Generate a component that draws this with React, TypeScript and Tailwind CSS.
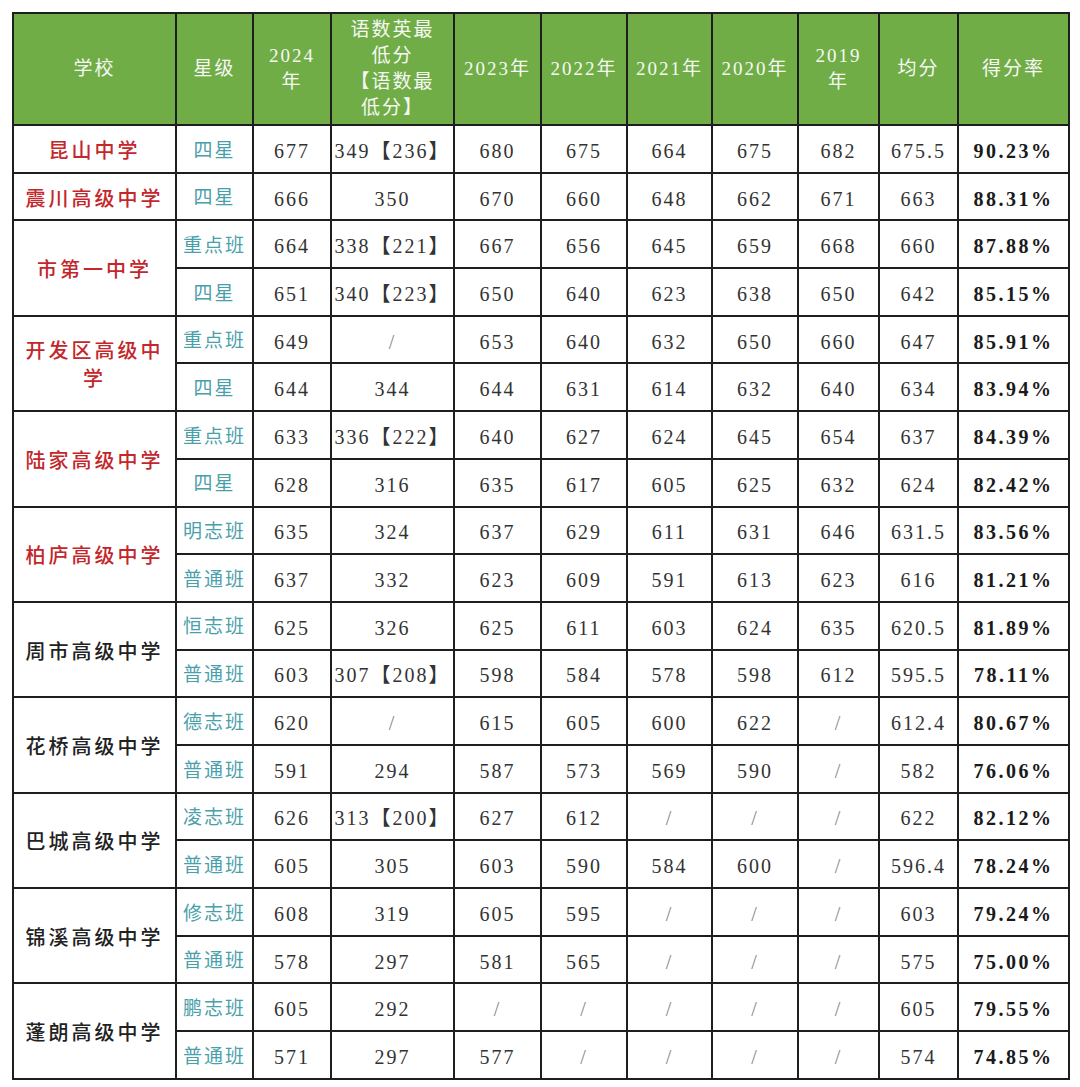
import React from 'react';

type Row = {
  cls: string;
  vals: string[];
  rate: string;
};

type School = {
  name: React.ReactNode;
  red: boolean;
  rows: Row[];
};

const SCHOOLS: School[] = [
  { name: '昆山中学', red: true, rows: [{ cls: '四星', vals: ['677', '349【236】', '680', '675', '664', '675', '682', '675.5'], rate: '90.23%' }] },
  { name: '震川高级中学', red: true, rows: [{ cls: '四星', vals: ['666', '350', '670', '660', '648', '662', '671', '663'], rate: '88.31%' }] },
  {
    name: '市第一中学',
    red: true,
    rows: [
      { cls: '重点班', vals: ['664', '338【221】', '667', '656', '645', '659', '668', '660'], rate: '87.88%' },
      { cls: '四星', vals: ['651', '340【223】', '650', '640', '623', '638', '650', '642'], rate: '85.15%' },
    ],
  },
  {
    name: <>开发区高级中<br />学</>,
    red: true,
    rows: [
      { cls: '重点班', vals: ['649', '/', '653', '640', '632', '650', '660', '647'], rate: '85.91%' },
      { cls: '四星', vals: ['644', '344', '644', '631', '614', '632', '640', '634'], rate: '83.94%' },
    ],
  },
  {
    name: '陆家高级中学',
    red: true,
    rows: [
      { cls: '重点班', vals: ['633', '336【222】', '640', '627', '624', '645', '654', '637'], rate: '84.39%' },
      { cls: '四星', vals: ['628', '316', '635', '617', '605', '625', '632', '624'], rate: '82.42%' },
    ],
  },
  {
    name: '柏庐高级中学',
    red: true,
    rows: [
      { cls: '明志班', vals: ['635', '324', '637', '629', '611', '631', '646', '631.5'], rate: '83.56%' },
      { cls: '普通班', vals: ['637', '332', '623', '609', '591', '613', '623', '616'], rate: '81.21%' },
    ],
  },
  {
    name: '周市高级中学',
    red: false,
    rows: [
      { cls: '恒志班', vals: ['625', '326', '625', '611', '603', '624', '635', '620.5'], rate: '81.89%' },
      { cls: '普通班', vals: ['603', '307【208】', '598', '584', '578', '598', '612', '595.5'], rate: '78.11%' },
    ],
  },
  {
    name: '花桥高级中学',
    red: false,
    rows: [
      { cls: '德志班', vals: ['620', '/', '615', '605', '600', '622', '/', '612.4'], rate: '80.67%' },
      { cls: '普通班', vals: ['591', '294', '587', '573', '569', '590', '/', '582'], rate: '76.06%' },
    ],
  },
  {
    name: '巴城高级中学',
    red: false,
    rows: [
      { cls: '凌志班', vals: ['626', '313【200】', '627', '612', '/', '/', '/', '622'], rate: '82.12%' },
      { cls: '普通班', vals: ['605', '305', '603', '590', '584', '600', '/', '596.4'], rate: '78.24%' },
    ],
  },
  {
    name: '锦溪高级中学',
    red: false,
    rows: [
      { cls: '修志班', vals: ['608', '319', '605', '595', '/', '/', '/', '603'], rate: '79.24%' },
      { cls: '普通班', vals: ['578', '297', '581', '565', '/', '/', '/', '575'], rate: '75.00%' },
    ],
  },
  {
    name: '蓬朗高级中学',
    red: false,
    rows: [
      { cls: '鹏志班', vals: ['605', '292', '/', '/', '/', '/', '/', '605'], rate: '79.55%' },
      { cls: '普通班', vals: ['571', '297', '577', '/', '/', '/', '/', '574'], rate: '74.85%' },
    ],
  },
];

const COLS = [163, 77, 78, 123, 87, 86, 85, 86, 81, 79, 111];

const cell = 'border-2 border-[#1e1e1e] text-center align-middle px-0 pb-0';

export default function App() {
  return (
    <div
      className="min-h-[1087px] w-[1080px] bg-white pl-[12px] pt-[12px]"
      style={{ fontFamily: '"Liberation Serif", "Noto Sans CJK SC", serif' }}
    >
      <table className="table-fixed border-collapse w-[1056px]">
        <colgroup>
          {COLS.map((w, i) => (
            <col key={i} style={{ width: w }} />
          ))}
        </colgroup>
        <thead>
          <tr className="h-[112px] bg-[#70ad47] text-[19px] leading-[26px] tracking-[2px] text-[#f6f8f3]">
            <th className={`${cell} pt-0 font-normal`}>学校</th>
            <th className={`${cell} pt-0 font-normal`}>星级</th>
            <th className={`${cell} pt-0 font-normal`}>2024<br />年</th>
            <th className={`${cell} pt-0 font-normal`}>语数英最<br />低分<br />【语数最<br />低分】</th>
            <th className={`${cell} pt-0 font-normal`}>2023年</th>
            <th className={`${cell} pt-0 font-normal`}>2022年</th>
            <th className={`${cell} pt-0 font-normal`}>2021年</th>
            <th className={`${cell} pt-0 font-normal`}>2020年</th>
            <th className={`${cell} pt-0 font-normal`}>2019<br />年</th>
            <th className={`${cell} pt-0 font-normal`}>均分</th>
            <th className={`${cell} pt-0 font-normal`}>得分率</th>
          </tr>
        </thead>
        <tbody className="text-[20px] tracking-[2px] text-[#333]">
          {SCHOOLS.map((s) =>
            s.rows.map((r, ri) => (
              <tr key={`${r.cls}-${r.rate}`} className="h-[47.7px]">
                {ri === 0 && (
                  <td
                    rowSpan={s.rows.length}
                    className={`${cell} pt-[4px] text-[20px] leading-[28px] tracking-[3px] font-medium ${s.red ? 'text-[#c3272b]' : 'text-[#222]'}`}
                  >
                    {s.name}
                  </td>
                )}
                <td className={`${cell} pt-[4px] text-[19px] text-[#4aa0aa]`}>{r.cls}</td>
                {r.vals.map((v, vi) => (
                  <td key={vi} className={`${cell} pt-[4px] ${v === '/' ? 'text-[#888] font-light' : ''}`}>
                    {v}
                  </td>
                ))}
                <td className={`${cell} pt-[4px] font-bold tracking-[2.5px] text-[#1a1a1a]`}>{r.rate}</td>
              </tr>
            ))
          )}
        </tbody>
      </table>
    </div>
  );
}
